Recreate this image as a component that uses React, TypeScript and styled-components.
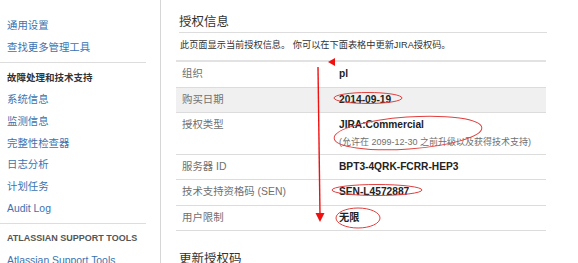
import React from 'react'
import styled, { createGlobalStyle } from 'styled-components'

const GlobalStyle = createGlobalStyle`
  body {
    margin: 0;
    background: #fff;
    font-family: "Liberation Sans", Arial, "Noto Sans CJK SC", sans-serif;
    color: #333;
    overflow: hidden;
  }
`

const Page = styled.div`
  position: relative;
  display: flex;
  width: 578px;
  height: 263px;
  overflow: hidden;
`

const Sidebar = styled.nav`
  width: 161px;
  flex-shrink: 0;
  border-right: 1px solid #d6d6d6;
  padding-top: 15px;
  box-sizing: border-box;
`

const NavGroup = styled.div<{ $last?: boolean }>`
  margin-right: 14px;
  padding: ${({ $last }) => ($last ? '4px 0 0' : '0 0 4px')};
  border-bottom: ${({ $last }) => ($last ? 'none' : '1px solid #ddd')};
  & + & {
    padding-top: 4px;
  }
`

const NavHeading = styled.div<{ $caps?: boolean }>`
  padding-left: 7px;
  line-height: 21.7px;
  font-size: ${({ $caps }) => ($caps ? '9px' : '9.5px')};
  font-weight: bold;
  color: ${({ $caps }) => ($caps ? '#555' : '#333')};
  white-space: nowrap;
`

const NavLink = styled.a`
  display: block;
  padding-left: 7px;
  line-height: 21.7px;
  font-size: 10.4px;
  color: #3b73af;
  text-decoration: none;
  white-space: nowrap;
`

const Main = styled.main`
  flex: 1;
  padding: 14px 31px 0 15px;
`

const Heading = styled.h2`
  margin: 0 0 0 3px;
  padding-bottom: 2px;
  border-bottom: 1px solid #ddd;
  font-size: 12.5px;
  line-height: 16px;
  font-weight: normal;
  color: #333;
`

const SubHeading = styled(Heading)`
  margin-top: 20px;
  border-bottom: none;
`

const Description = styled.p`
  margin: 5px 0 8px 4px;
  font-size: 9.2px;
  line-height: 14px;
  color: #333;
  white-space: nowrap;
`

const Table = styled.table`
  width: 370px;
  border-collapse: collapse;
  border-top: 2px solid #e2e2e2;
`

const Row = styled.tr<{ $shaded?: boolean }>`
  background: ${({ $shaded }) => ($shaded ? '#f0f0f0' : '#fff')};
  border-bottom: 1px solid #dcdcdc;
`

const Label = styled.td`
  width: 145px;
  padding: 5px 6px;
  vertical-align: top;
  font-size: 10.4px;
  line-height: 14.5px;
  color: #707070;
  white-space: nowrap;
`

const Value = styled.td`
  padding: 5px 6px;
  vertical-align: top;
  font-size: 10.2px;
  line-height: 14.5px;
  font-weight: bold;
  color: #222;
  white-space: nowrap;
`

const Note = styled.div`
  margin-top: 2px;
  font-size: 9px;
  line-height: 14px;
  font-weight: normal;
  color: #707070;
`

const Marks = styled.svg`
  position: absolute;
  left: 0;
  top: 0;
  pointer-events: none;
`

const rows = [
  { label: '组织', value: 'pl' },
  { label: '购买日期', value: '2014-09-19', shaded: true },
  {
    label: '授权类型',
    value: 'JIRA:Commercial',
    note: '(允许在 2099-12-30 之前升级以及获得技术支持)',
  },
  { label: '服务器 ID', value: 'BPT3-4QRK-FCRR-HEP3' },
  { label: '技术支持资格码 (SEN)', value: 'SEN-L4572887' },
  { label: '用户限制', value: '无限' },
]

const Annotations: React.FC = () => (
  <Marks width="578" height="263" viewBox="0 0 578 263">
    <polygon points="328,62 335,58 335,66" fill="#f01010" />
    <line x1="318" y1="67" x2="320" y2="215" stroke="#f01010" strokeWidth="1.4" />
    <polygon points="315.5,213 324.5,213 320,222" fill="#f01010" />
    <g fill="none" stroke="#e0403f" strokeWidth="1">
      <ellipse cx="368" cy="98" rx="34" ry="5.5" />
      <ellipse cx="408" cy="133" rx="74" ry="16" transform="rotate(-4 408 133)" />
      <ellipse cx="377" cy="190" rx="45" ry="5.5" />
      <ellipse cx="358" cy="218" rx="22" ry="10" />
    </g>
  </Marks>
)

const App: React.FC = () => (
  <Page>
    <GlobalStyle />
    <Sidebar>
      <NavGroup>
        <NavLink>通用设置</NavLink>
        <NavLink>查找更多管理工具</NavLink>
      </NavGroup>
      <NavGroup>
        <NavHeading>故障处理和技术支持</NavHeading>
        <NavLink>系统信息</NavLink>
        <NavLink>监测信息</NavLink>
        <NavLink>完整性检查器</NavLink>
        <NavLink>日志分析</NavLink>
        <NavLink>计划任务</NavLink>
        <NavLink>Audit Log</NavLink>
      </NavGroup>
      <NavGroup $last>
        <NavHeading $caps>ATLASSIAN SUPPORT TOOLS</NavHeading>
        <NavLink>Atlassian Support Tools</NavLink>
      </NavGroup>
    </Sidebar>
    <Main>
      <Heading>授权信息</Heading>
      <Description>此页面显示当前授权信息。 你可以在下面表格中更新JIRA授权码。</Description>
      <Table>
        <tbody>
          {rows.map((r) => (
            <Row key={r.label} $shaded={r.shaded}>
              <Label>{r.label}</Label>
              <Value>
                {r.value}
                {r.note && <Note>{r.note}</Note>}
              </Value>
            </Row>
          ))}
        </tbody>
      </Table>
      <SubHeading>更新授权码</SubHeading>
    </Main>
    <Annotations />
  </Page>
)

export default App
